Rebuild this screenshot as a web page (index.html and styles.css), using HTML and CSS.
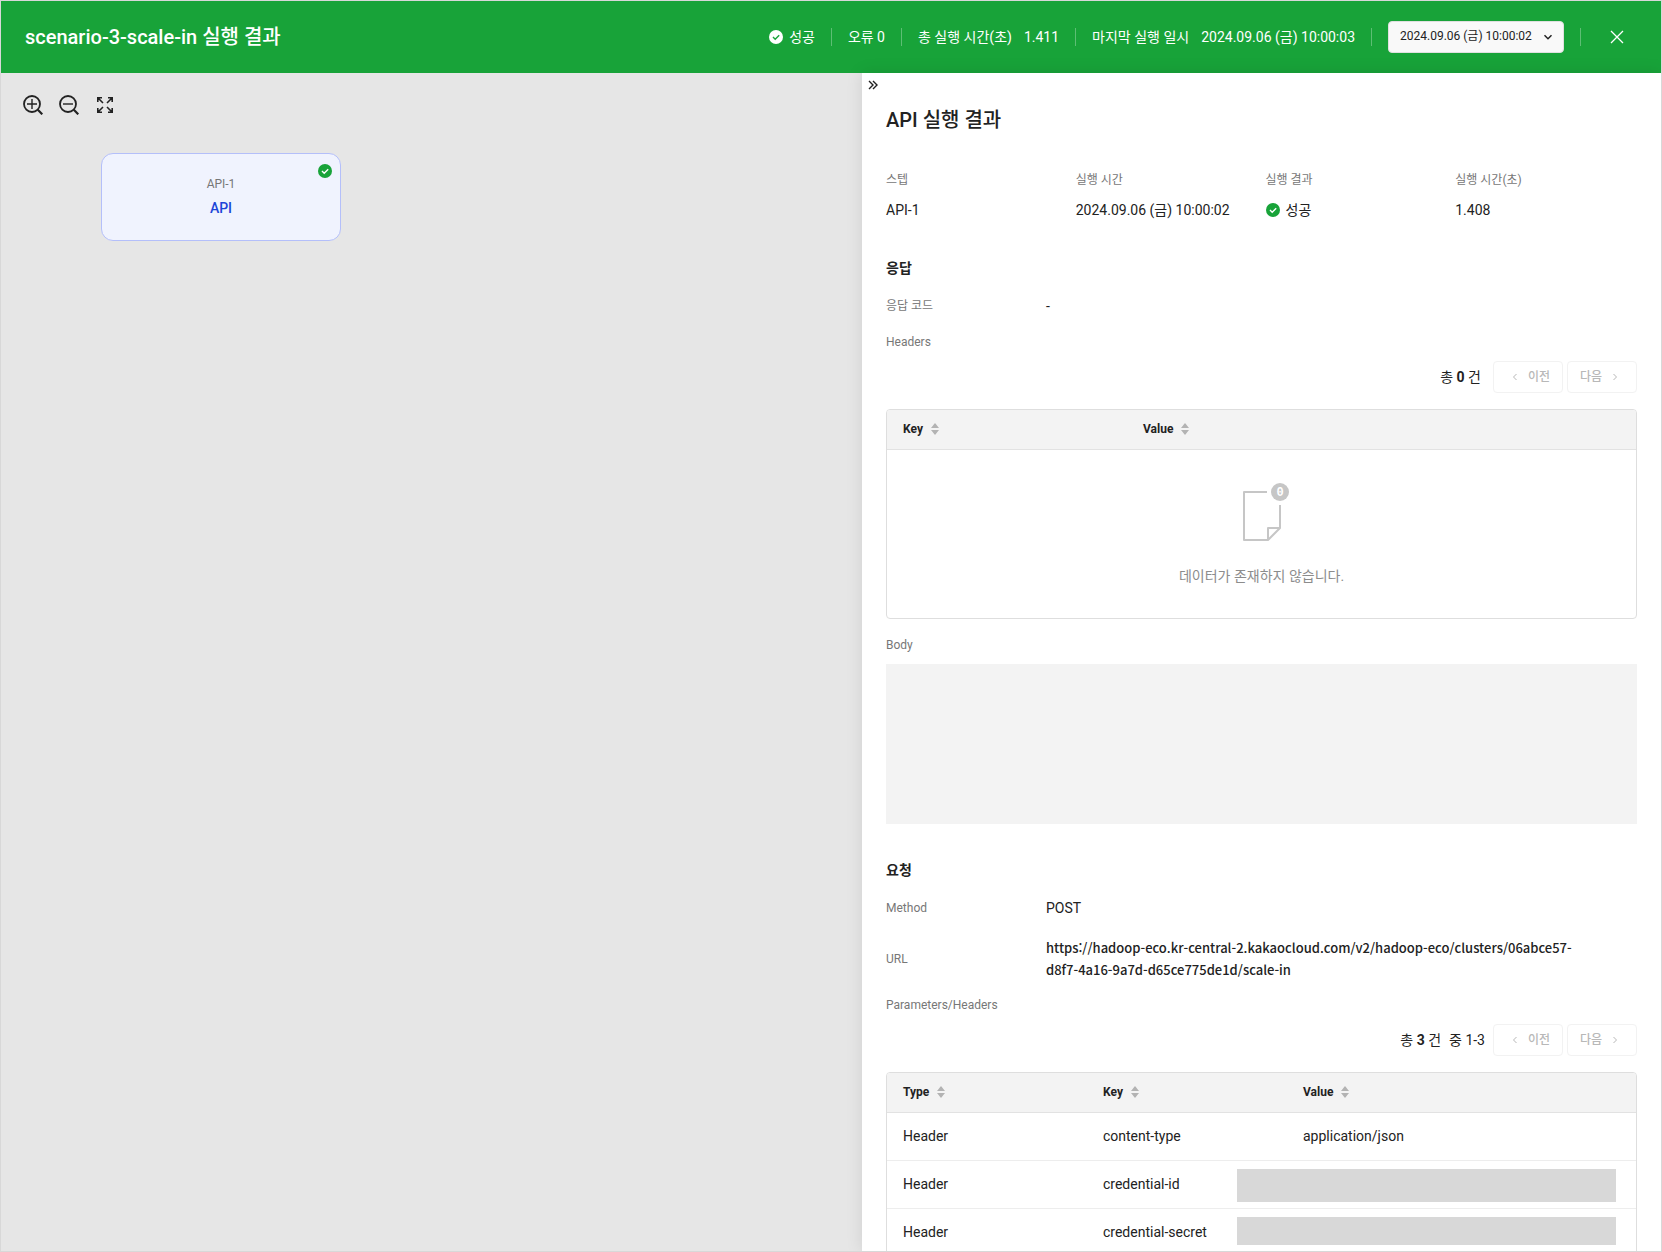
FILE: index.html
```html
<!DOCTYPE html>
<html lang="ko">
<head>
<meta charset="utf-8">
<meta name="viewport" content="width=device-width, initial-scale=1">
<title>scenario-3-scale-in 실행 결과</title>
<link rel="stylesheet" href="styles.css">
</head>
<body>
<svg class="sprite" aria-hidden="true">
  <symbol id="sort" viewBox="0 0 8 12"><path d="M4 0l4 5H0zM4 12l4-5H0z" fill="#b3b3b3"/></symbol>
  <symbol id="prev" viewBox="0 0 12 12"><path d="M7.500 3L4.500 6l3 3" fill="none" stroke="#b8b8b8" stroke-width="1"/></symbol>
  <symbol id="next" viewBox="0 0 12 12"><path d="M4.500 3l3 3-3 3" fill="none" stroke="#b8b8b8" stroke-width="1"/></symbol>
</svg>
<div class="app">
  <header class="topbar">
    <h1 class="topbar-title">scenario-3-scale-in 실행 결과</h1>
    <div class="summary">
      <span class="status">
        <svg width="14" height="14" viewBox="0 0 14 14" aria-hidden="true"><circle cx="7" cy="7" r="7" fill="#fff"/><path d="M4 7l2.200 2.200L10.200 5.200" fill="none" stroke="#18a339" stroke-width="1.400"/></svg>
        성공
      </span>
      <span class="divider"></span>
      <span>오류 0</span>
      <span class="divider"></span>
      <span class="pair"><span>총 실행 시간(초)</span><span>1.411</span></span>
      <span class="divider"></span>
      <span class="pair"><span>마지막 실행 일시</span><span>2024.09.06 (금) 10:00:03</span></span>
      <span class="divider"></span>
      <span class="picker">
        <select class="picker-select" aria-label="실행 일시"><option>2024.09.06 (금) 10:00:02</option></select>
        <svg class="picker-arrow" width="10" height="10" viewBox="0 0 10 10" aria-hidden="true"><path d="M1.500 3.200L5 6.700l3.500-3.500" fill="none" stroke="#222" stroke-width="1.500"/></svg>
      </span>
      <span class="divider"></span>
      <button class="icon-button close" type="button" aria-label="닫기"><svg width="14" height="14" viewBox="0 0 14 14"><path d="M1 1l12 12M13 1L1 13" stroke="#fff" stroke-width="1.300"/></svg></button>
    </div>
  </header>
  <main class="workspace">
    <section class="canvas">
      <div class="tools">
        <button class="icon-button" type="button" aria-label="확대"><svg width="20" height="20" viewBox="0 0 20 20" fill="none" stroke="#222"><circle cx="9" cy="9" r="8" stroke-width="1.800"/><path d="M14.800 14.800l4.500 4.500" stroke-width="2.200"/><path d="M4 9h10M9 4v10" stroke-width="1.400"/></svg></button>
        <button class="icon-button" type="button" aria-label="축소"><svg width="20" height="20" viewBox="0 0 20 20" fill="none" stroke="#222"><circle cx="9" cy="9" r="8" stroke-width="1.800"/><path d="M14.800 14.800l4.500 4.500" stroke-width="2.200"/><path d="M4 9h10" stroke-width="1.400"/></svg></button>
        <button class="icon-button" type="button" aria-label="화면 맞춤"><svg width="20" height="20" viewBox="0 0 20 20" fill="none" stroke="#222" stroke-width="1.600"><path d="M2.800 7V2.800H7M2.800 2.800l5.200 5.200M13 2.800h4.200V7M17.200 2.800L12 8M2.800 13v4.200H7M2.800 17.200L8 12M17.200 13v4.200H13M17.200 17.200L12 12"/></svg></button>
      </div>
      <div class="node">
        <span class="node-step">API-1</span>
        <strong class="node-name">API</strong>
        <svg class="node-badge" width="14" height="14" viewBox="0 0 14 14" aria-hidden="true"><circle cx="7" cy="7" r="7" fill="#18a339"/><path d="M4 7l2.200 2.200L10.200 5.200" fill="none" stroke="#fff" stroke-width="1.400"/></svg>
      </div>
    </section>
    <aside class="panel">
      <button class="icon-button collapse" type="button" aria-label="접기"><svg width="10" height="10" viewBox="0 0 10 10"><path d="M1 1l4 4-4 4M5 1l4 4-4 4" fill="none" stroke="#222" stroke-width="1.400"/></svg></button>
      <h2 class="panel-title">API 실행 결과</h2>
      <dl class="facts">
        <div><dt>스텝</dt><dd>API-1</dd></div>
        <div><dt>실행 시간</dt><dd>2024.09.06 (금) 10:00:02</dd></div>
        <div><dt>실행 결과</dt><dd class="status"><svg width="14" height="14" viewBox="0 0 14 14" aria-hidden="true"><circle cx="7" cy="7" r="7" fill="#18a339"/><path d="M4 7l2.200 2.200L10.200 5.200" fill="none" stroke="#fff" stroke-width="1.400"/></svg>성공</dd></div>
        <div><dt>실행 시간(초)</dt><dd>1.408</dd></div>
      </dl>

      <section class="block">
        <h3 class="block-title">응답</h3>
        <div class="field"><span class="label">응답 코드</span><span>-</span></div>
        <div class="label list-label">Headers</div>
        <div class="pager">
          <span>총 <b>0</b> 건</span>
          <div class="pager-buttons">
            <button class="page-button page-prev" type="button" disabled><svg width="12" height="12"><use href="#prev"/></svg>이전</button>
            <button class="page-button page-next" type="button" disabled>다음<svg width="12" height="12"><use href="#next"/></svg></button>
          </div>
        </div>
        <div class="table-box">
          <table>
            <colgroup><col class="col-wide"><col></colgroup>
            <thead><tr>
              <th>Key<svg class="sort" width="8" height="12"><use href="#sort"/></svg></th>
              <th>Value<svg class="sort" width="8" height="12"><use href="#sort"/></svg></th>
            </tr></thead>
            <tbody><tr><td class="empty" colspan="2">
              <svg class="empty-icon" width="56" height="60" viewBox="0 0 56 60" aria-hidden="true">
                <path d="M33 11H10v48h24l12-12V24M34 59V47h12" fill="none" stroke="#c6c6c6" stroke-width="2" stroke-linejoin="round"/>
                <circle cx="46" cy="11" r="9" fill="#c6c6c6"/>
                <text class="empty-count" x="46" y="15" text-anchor="middle">0</text>
              </svg>
              <p>데이터가 존재하지 않습니다.</p>
            </td></tr></tbody>
          </table>
        </div>
        <div class="label body-label">Body</div>
        <div class="body-box"></div>
      </section>

      <section class="block request">
        <h3 class="block-title">요청</h3>
        <div class="field"><span class="label">Method</span><span>POST</span></div>
        <div class="field url-field"><span class="label">URL</span><span class="url">https://hadoop-eco.kr-central-2.kakaocloud.com/v2/hadoop-eco/clusters/06abce57-d8f7-4a16-9a7d-d65ce775de1d/scale-in</span></div>
        <div class="label list-label">Parameters/Headers</div>
        <div class="pager pager-ranged">
          <span class="range"><span>총 <b>3</b> 건</span><span>중 1-3</span></span>
          <div class="pager-buttons">
            <button class="page-button page-prev" type="button" disabled><svg width="12" height="12"><use href="#prev"/></svg>이전</button>
            <button class="page-button page-next" type="button" disabled>다음<svg width="12" height="12"><use href="#next"/></svg></button>
          </div>
        </div>
        <div class="table-box">
          <table>
            <colgroup><col class="col"><col class="col"><col></colgroup>
            <thead><tr>
              <th>Type<svg class="sort" width="8" height="12"><use href="#sort"/></svg></th>
              <th>Key<svg class="sort" width="8" height="12"><use href="#sort"/></svg></th>
              <th>Value<svg class="sort" width="8" height="12"><use href="#sort"/></svg></th>
            </tr></thead>
            <tbody>
              <tr><td>Header</td><td>content-type</td><td>application/json</td></tr>
              <tr><td>Header</td><td>credential-id</td><td class="masked"><span class="mask"></span></td></tr>
              <tr><td>Header</td><td>credential-secret</td><td class="masked"><span class="mask mask-short"></span></td></tr>
            </tbody>
          </table>
        </div>
      </section>
    </aside>
  </main>
</div>
</body>
</html>
```
FILE: styles.css
```css
* { box-sizing: border-box; }

body {
  margin: 0;
  font: 14px/20px Roboto, "Noto Sans CJK KR", sans-serif;
  color: #222;
}

h1, h2, h3, p, dl, dd { margin: 0; }
h1, h2, h3 { font-weight: 500; }
svg { display: block; flex: none; }
button, select { font: inherit; color: inherit; }

.sprite { position: absolute; width: 0; height: 0; }

.app {
  display: flex;
  flex-direction: column;
  height: 100vh;
  border: 1px solid #d8d8d8;
  overflow: hidden;
}

/* Top bar */
.topbar {
  display: flex;
  align-items: center;
  justify-content: space-between;
  flex: none;
  height: 72px;
  padding: 0 24px;
  background: #18a339;
  color: #fff;
}
.topbar-title { font-size: 20px; line-height: 28px; }
.summary { display: flex; align-items: center; gap: 16px; }
.pair { display: flex; gap: 12px; }
.status { display: flex; align-items: center; gap: 6px; }
.divider { width: 1px; height: 18px; background: rgba(255, 255, 255, 0.3); }

.picker { position: relative; }
.picker-select {
  display: block;
  width: 176px;
  height: 32px;
  padding: 0 24px 2px 11px;
  border: 1px solid #e0e0e0;
  border-radius: 4px;
  background: #f9f9f9;
  color: #222;
  font-size: 12px;
  appearance: none;
}
.picker-arrow { position: absolute; right: 11px; top: 11px; pointer-events: none; }

.icon-button {
  display: flex;
  align-items: center;
  justify-content: center;
  width: 20px;
  height: 20px;
  padding: 0;
  border: 0;
  background: none;
}
.close { width: 40px; }

/* Workspace */
.workspace { display: flex; flex: 1; min-height: 0; }
.canvas { position: relative; flex: 1; background: #e6e6e6; }
.tools { display: flex; gap: 16px; padding: 22px; }
.node {
  position: absolute;
  left: 100px;
  top: 80px;
  display: flex;
  flex-direction: column;
  align-items: center;
  justify-content: center;
  gap: 4px;
  width: 240px;
  height: 88px;
  padding-bottom: 2px;
  border: 1px solid #b4bffa;
  border-radius: 12px;
  background: #f0f3fe;
}
.node-step { font-size: 12px; color: #777; }
.node-name { font-weight: 500; color: #1d45d8; }
.node-badge { position: absolute; right: 8px; top: 10px; }

/* Result panel */
.panel {
  position: relative;
  width: 48%;
  min-width: 799px;
  padding: 33px 24px 0;
  background: #fff;
  box-shadow: 0 0 16px rgba(0, 0, 0, 0.1);
  overflow: hidden;
}
.collapse { position: absolute; left: 1px; top: 2px; }
.panel-title { font-size: 20px; line-height: 28px; }

.facts {
  display: grid;
  grid-template-columns: repeat(4, 1fr);
  gap: 8px;
  margin-top: 36px;
}
.facts dt, .label { font-size: 12px; color: #777; }
.facts dd { margin-top: 10px; }

.block { margin-top: 38px; }
.request { margin-top: 36px; }
.block-title { font-size: 14px; font-weight: 700; }
.field {
  display: grid;
  grid-template-columns: 160px 1fr;
  align-items: center;
  margin-top: 18px;
}
.list-label { margin-top: 16px; }
.url-field { margin-top: 19px; }
.url-field + .list-label { margin-top: 14px; }
.url {
  padding-right: 48px;
  font: 500 13px/22px "Noto Sans CJK KR", sans-serif;
  overflow-wrap: anywhere;
}

.pager {
  display: flex;
  align-items: center;
  justify-content: flex-end;
  gap: 12px;
  margin-top: 9px;
}
.pager-ranged { gap: 8px; }
.range { display: flex; gap: 8px; }
.pager-buttons { display: flex; gap: 4px; }
.page-button {
  display: flex;
  align-items: center;
  justify-content: center;
  gap: 7px;
  width: 70px;
  height: 32px;
  padding: 0;
  border: 1px solid #f2f2f2;
  border-radius: 4px;
  background: #fff;
  color: #b8b8b8;
  font-size: 12px;
  font-weight: 500;
}
.page-prev { padding-left: 3px; }
.page-next { padding-right: 3px; }

.table-box {
  margin-top: 16px;
  border: 1px solid #dedede;
  border-radius: 4px;
  overflow: hidden;
}
table { width: 100%; table-layout: fixed; border-collapse: collapse; }
.col { width: 200px; }
.col-wide { width: 240px; }
th {
  height: 39px;
  padding: 0 16px;
  border-bottom: 1px solid #e2e2e2;
  background: #f3f3f3;
  font-size: 12px;
  font-weight: 700;
  text-align: left;
}
.sort { display: inline-block; margin-left: 8px; vertical-align: -2px; }
td { height: 48px; padding: 0 16px; border-top: 1px solid #ededed; }
.empty { height: 169px; text-align: center; color: #8c8c8c; }
.empty-icon { margin: 0 auto 25px; }
.empty-count { font: 700 12px "Liberation Mono", monospace; fill: #fff; }

.masked { position: relative; }
.mask { position: absolute; left: -50px; right: 20px; top: 8px; height: 33px; background: #d8d8d8; }
.mask-short { height: 28px; }

.body-label { margin-top: 16px; }
.body-box { height: 160px; margin-top: 9px; background: #f3f3f3; }
```
